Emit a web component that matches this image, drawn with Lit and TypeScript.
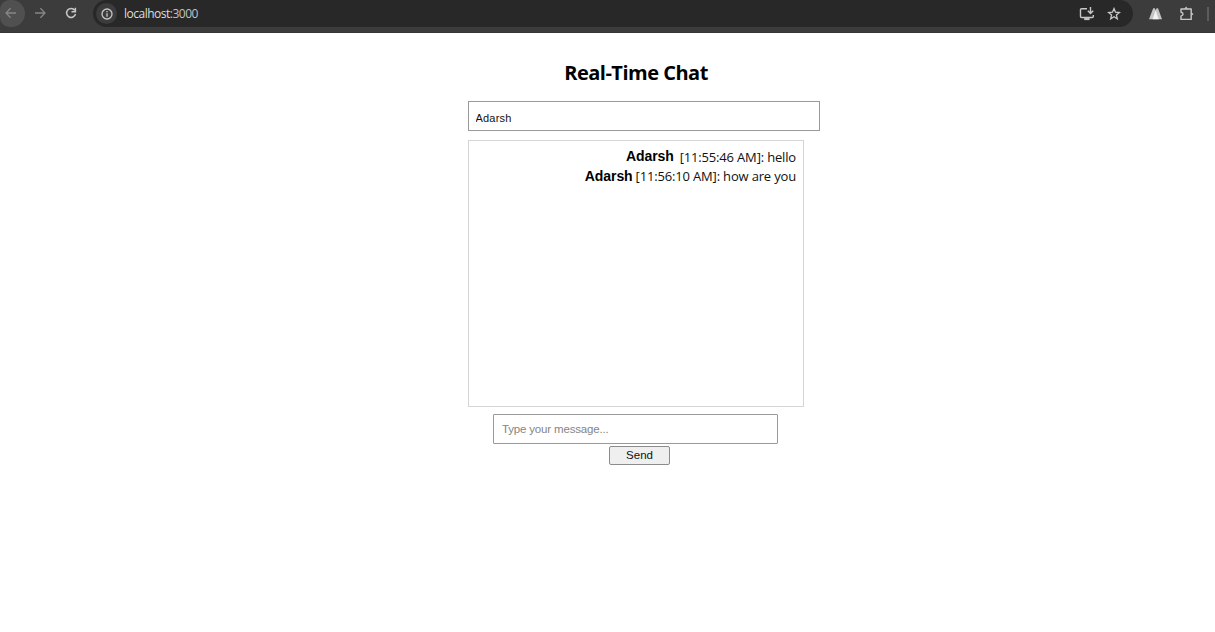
import { LitElement, html, css } from "lit";
import { customElement, state } from "lit/decorators.js";

@customElement("browser-bar")
class BrowserBar extends LitElement {
  static styles = css`
    :host {
      display: flex;
      align-items: flex-start;
      box-sizing: border-box;
      height: 33px;
      overflow: hidden;
      background: #3c3c3c;
      border-bottom: 1px solid #353535;
      font: 12px/27px "Open Sans", "Noto Sans", sans-serif;
      color: #dedede;
    }
    svg { display: block; fill: none; stroke: #c7c7c7; stroke-width: 1.5; }
    .nav { display: flex; align-items: center; justify-content: center; width: 30px; height: 26px; flex: none; }
    .back { box-sizing: border-box; width: 25px; height: 27px; background: #505050; border-radius: 10px 14px 14px 10px; padding: 0 3px 1px 0; }
    .dim svg { stroke: #858585; stroke-width: 1.3; }
    .reload { box-sizing: border-box; padding-left: 2px; }
    .address {
      display: flex;
      align-items: center;
      box-sizing: border-box;
      flex: 1;
      height: 27px;
      margin-left: 8px;
      padding: 0 12px 0 3px;
      background: #282828;
      border-radius: 14px;
    }
    .info { display: flex; align-items: center; justify-content: center; width: 21px; height: 21px; border-radius: 50%; background: #3c3c3c; }
    .url { flex: 1; margin-left: 7px; letter-spacing: -0.5px; white-space: nowrap; }
    .url span { color: #c2c2c2; }
    .star { margin-left: 12px; }
    .extensions { display: flex; align-items: center; height: 27px; padding-left: 15px; }
    .puzzle { margin-left: 16px; }
    .divider { width: 2px; height: 14px; margin: 0 6px 0 13px; background: #5c5c5c; }
    .mount { stroke: none; fill: #c4c4c4; }
    .peak { stroke: none; fill: #f2f2f2; }
  `;

  render() {
    return html`
      <div class="nav back dim">
        <svg width="12" height="12" viewBox="0 0 12 12"><path d="M11 6H1M5.6 1.3 1 6l4.6 4.7" /></svg>
      </div>
      <div class="nav dim">
        <svg width="12" height="12" viewBox="0 0 12 12"><path d="M1 6h10M6.4 1.3 11 6l-4.6 4.7" /></svg>
      </div>
      <div class="nav reload">
        <svg width="12" height="12" viewBox="0 0 12 12"><path d="M9.7 3.2A4.5 4.5 0 1 0 10.5 7M10.4.8v4H6.5" /></svg>
      </div>
      <div class="address">
        <div class="info">
          <svg width="12" height="12" viewBox="0 0 12 12"><circle cx="6" cy="6" r="5" stroke-width="1.3" /><path d="M6 5.3v3.5M6 3v1.3" stroke-width="1.3" /></svg>
        </div>
        <div class="url">localhost<span>:3000</span></div>
        <svg width="16" height="14" viewBox="0 0 16 14"><path d="M8 1.8H2.5a1 1 0 0 0-1 1v6.7a1 1 0 0 0 1 1h10.8a1 1 0 0 0 1-1V8M11.5 0v6M8.8 3.7l2.7 2.7 2.7-2.7" stroke-width="1.4" /><path d="M5.2 12.1h5.4" stroke-width="2" /></svg>
        <svg class="star" width="14" height="14" viewBox="0 0 14 14"><path d="M7 1.6 8.5 5.2l3.9.3-3 2.5.9 3.8L7 9.8l-3.3 2 .9-3.8-3-2.5 3.9-.3z" stroke-width="1.3" /></svg>
      </div>
      <div class="extensions">
        <svg width="15" height="13" viewBox="0 0 15 13"><path class="mount" d="M1 12.3 5.2 1.2h1.600l.900 2 .9-2H10L14 12.3z" /><path class="peak" d="M4.600 12.300 7.600 3.200 10.700 12.300z" /></svg>
        <svg class="puzzle" width="15" height="15" viewBox="0 0 15 15"><path d="M2 3h10.200v10.400H2V10l1.800-1V7.200L2 6.200z" stroke-width="1.4" stroke-linejoin="round" /><path d="M5.300 2.800 7.100.6l1.800 2.200zM12.300 6.300l2.200 1.800-2.200 1.800z" fill="#c7c7c7" stroke="none" /></svg>
        <div class="divider"></div>
      </div>
    `;
  }
}

@customElement("app-root")
class AppRoot extends LitElement {
  static styles = css`
    :host { display: block; height: 632px; overflow: hidden; background: #fff; color: #111; }
    .chat { display: flex; flex-direction: column; width: 336px; margin-left: 468px; }
    h2 {
      margin: 26px 0 0;
      font: 700 20px/28px "Open Sans", "Noto Sans", sans-serif;
      letter-spacing: -0.5px;
      text-align: center;
      color: #000;
    }
    input { box-sizing: border-box; border: 1px solid #999; outline: 0; background: #fff; font-family: "Liberation Sans", Arial, sans-serif; }
    .name { width: 352px; height: 30px; margin-top: 14px; padding: 3px 7px 0 6.5px; font-size: 11px; letter-spacing: 0.2px; color: #111; }
    .messages { box-sizing: border-box; height: 267px; margin-top: 9px; padding: 6px 7px; border: 1px solid #d5d5d5; }
    .message { display: flex; justify-content: flex-end; align-items: center; height: 19px; white-space: nowrap; }
    .author { margin-right: 3px; font: 700 14px/18px "Liberation Sans", Arial, sans-serif; letter-spacing: -0.08px; color: #000; }
    .first .author { margin-right: 6px; padding-bottom: 2px; }
    .text { font: 13px/18px "Open Sans", "Noto Sans", sans-serif; letter-spacing: -0.17px; }
    .draft { width: 285px; height: 30px; margin: 7px 0 0 25px; padding: 0 8px; border-radius: 1px; font-size: 11.5px; letter-spacing: -0.17px; }
    .draft::placeholder { color: #858585; opacity: 1; }
    button {
      width: 61px;
      height: 19px;
      margin: 2px 0 0 141px;
      padding: 0 0 1px;
      border: 1px solid #8c8c8c;
      border-radius: 2px;
      background: #efefef;
      color: #111;
      font: 11.5px/15px "Liberation Sans", Arial, sans-serif;
    }
  `;

  @state() messages = [
    { author: "Adarsh", time: "11:55:46 AM", body: "hello" },
    { author: "Adarsh", time: "11:56:10 AM", body: "how are you" },
  ];

  render() {
    return html`
      <browser-bar></browser-bar>
      <main class="chat">
        <h2>Real-Time Chat</h2>
        <input class="name" .value=${"Adarsh"} />
        <div class="messages">
          ${this.messages.map(
            (m, i) => html`<div class="message ${i === 0 ? "first" : ""}">
              <span class="author">${m.author}</span><span class="text">[${m.time}]: ${m.body}</span>
            </div>`
          )}
        </div>
        <input class="draft" placeholder="Type your message..." />
        <button>Send</button>
      </main>
    `;
  }
}
